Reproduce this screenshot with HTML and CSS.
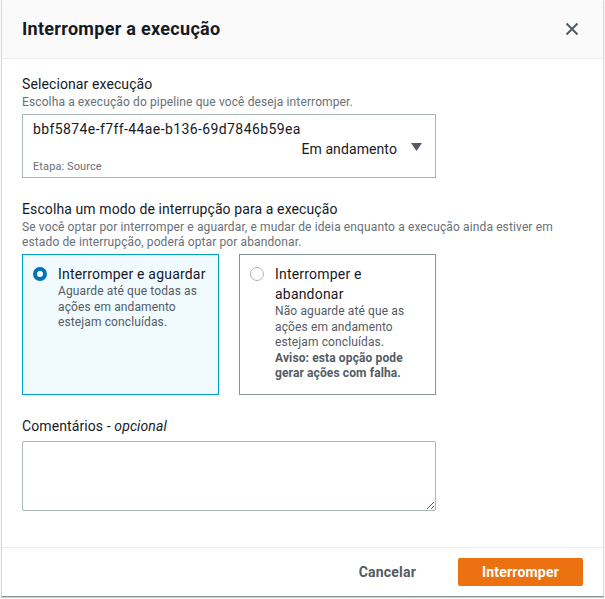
FILE: index.html
```html
<!DOCTYPE html>
<html lang="pt-BR">
<head>
<meta charset="utf-8">
<title>Interromper a execução</title>
<link rel="stylesheet" href="styles.css">
</head>
<body>
<div class="modal">
  <header class="modal-header">
    <h2 class="modal-title">Interromper a execução</h2>
    <button class="close-btn" aria-label="Fechar">
      <svg width="14" height="14" viewBox="0 0 14 14"><path d="M1.5 1.5 L12.5 12.5 M12.5 1.5 L1.5 12.5" stroke="#545b64" stroke-width="2" fill="none"/></svg>
    </button>
  </header>
  <div class="modal-body">
    <div class="field">
      <div class="label">Selecionar execução</div>
      <div class="desc">Escolha a execução do pipeline que você deseja interromper.</div>
      <div class="select">
        <div class="select-id">bbf5874e-f7ff-44ae-b136-69d7846b59ea</div>
        <div class="select-status">
          <span>Em andamento</span>
          <svg class="caret" width="11" height="8" viewBox="0 0 11 8"><path d="M0 0 H11 L5.5 8 Z" fill="#545b64"/></svg>
        </div>
        <div class="select-tag">Etapa: Source</div>
      </div>
    </div>

    <div class="field field-mode">
      <div class="label">Escolha um modo de interrupção para a execução</div>
      <div class="desc desc-wide">Se você optar por interromper e aguardar, e mudar de ideia enquanto a execução ainda estiver em estado de interrupção, poderá optar por abandonar.</div>
      <div class="tiles">
        <div class="tile tile-selected">
          <span class="radio radio-checked"></span>
          <div class="tile-text">
            <div class="tile-title">Interromper e aguardar</div>
            <div class="tile-desc">Aguarde até que todas as ações em andamento estejam concluídas.</div>
          </div>
        </div>
        <div class="tile">
          <span class="radio"></span>
          <div class="tile-text">
            <div class="tile-title">Interromper e abandonar</div>
            <div class="tile-desc">Não aguarde até que as ações em andamento estejam concluídas.</div>
            <div class="tile-desc tile-warn">Aviso: esta opção pode gerar ações com falha.</div>
          </div>
        </div>
      </div>
    </div>

    <div class="field field-comments">
      <div class="label">Comentários - <i>opcional</i></div>
      <textarea class="textarea"></textarea>
    </div>
  </div>
  <footer class="modal-footer">
    <button class="btn btn-link">Cancelar</button>
    <button class="btn btn-primary">Interromper</button>
  </footer>
</div>
</body>
</html>
```

FILE: styles.css
```css
* { box-sizing: border-box; }
html, body { margin: 0; padding: 0; background: #ffffff; }
body {
  font-family: Roboto, "Noto Sans", Arial, sans-serif;
  color: #16191f;
  width: 605px;
  height: 599px;
  overflow: hidden;
  letter-spacing: 0.1px;
}
.modal {
  margin-left: 1px;
  width: 603px;
  height: 597px;
  border-left: 1px solid #d5dbdb;
  border-right: 1px solid #d5dbdb;
  border-bottom: 1px solid #879596;
  box-shadow: 0 1px 1px rgba(0,28,36,0.2);
  display: flex;
  flex-direction: column;
  background: #fff;
}
.modal-header {
  height: 59px;
  background: #fafafa;
  border-bottom: 1px solid #eaeded;
  display: flex;
  align-items: center;
  justify-content: space-between;
  padding: 0 24px 0 20px;
}
.modal-title {
  margin: 0;
  font-size: 18px;
  font-weight: 700;
  line-height: 22px;
  letter-spacing: 0.3px;
  color: #16191f;
}
.close-btn {
  border: 0;
  background: none;
  padding: 0;
  width: 14px;
  height: 14px;
  display: flex;
}
.modal-body {
  padding: 15px 20px 0 20px;
  height: 489px;
  border-bottom: 1px solid #eaeded;
}
.field { width: 414px; }
.label {
  font-size: 14px;
  line-height: 20px;
  color: #16191f;
}
.desc {
  font-size: 12px;
  line-height: 16px;
  letter-spacing: 0.12px;
  color: #687078;
}
.desc-wide { width: 560px; line-height: 15px; margin-top: 1px; }
.select {
  margin-top: 4px;
  border: 1px solid #aab7b8;
  padding: 4px 13px 2px 10px;
}
.select-id, .select-status {
  font-size: 14px;
  line-height: 20px;
  color: #16191f;
}
.select-id { letter-spacing: 0.4px; }
.select-status {
  display: flex;
  justify-content: flex-end;
  align-items: center;
  gap: 14px;
}
.caret { margin-top: -4px; }
.select-tag {
  font-size: 11px;
  line-height: 16px;
  color: #687078;
}
.field-mode { margin-top: 21px; }
.tiles {
  margin-top: 4px;
  display: grid;
  grid-template-columns: 197px 197px;
  column-gap: 20px;
}
.tile {
  height: 141px;
  border: 1px solid #879596;
  padding: 9px 7px 0 10px;
  display: flex;
  gap: 11px;
  align-items: flex-start;
}
.tile-selected {
  border-color: #00a1c9;
  background: #f1faff;
}
.radio {
  flex: none;
  width: 14px;
  height: 14px;
  border-radius: 50%;
  border: 1px solid #aab7b8;
  background: #fff;
  margin-top: 3px;
}
.radio-checked {
  border: 4px solid #0073bb;
}
.tile-title {
  font-size: 14px;
  line-height: 20px;
  letter-spacing: 0.2px;
  color: #16191f;
}
.tile-desc {
  font-size: 12px;
  line-height: 15.5px;
  letter-spacing: 0.12px;
  color: #545b64;
}
.tile-warn { font-weight: 700; }
.field-comments { margin-top: 21px; }
.textarea {
  display: block;
  margin-top: 5px;
  width: 414px;
  height: 70px;
  border: 1px solid #aab7b8;
  border-radius: 2px;
  resize: vertical;
  font-family: inherit;
}
.modal-footer {
  flex: 1;
  display: flex;
  justify-content: flex-end;
  align-items: center;
  padding: 0 20px 0 0;
  gap: 22px;
}
.btn {
  font-family: inherit;
  font-size: 14px;
  font-weight: 700;
  letter-spacing: 0.2px;
  border: 0;
  height: 28px;
  padding: 0 20px;
  cursor: pointer;
}
.btn-link {
  background: none;
  color: #545b64;
}
.btn-primary {
  background: #ec7211;
  color: #fff;
  border-radius: 2px;
  width: 125px;
}
```
